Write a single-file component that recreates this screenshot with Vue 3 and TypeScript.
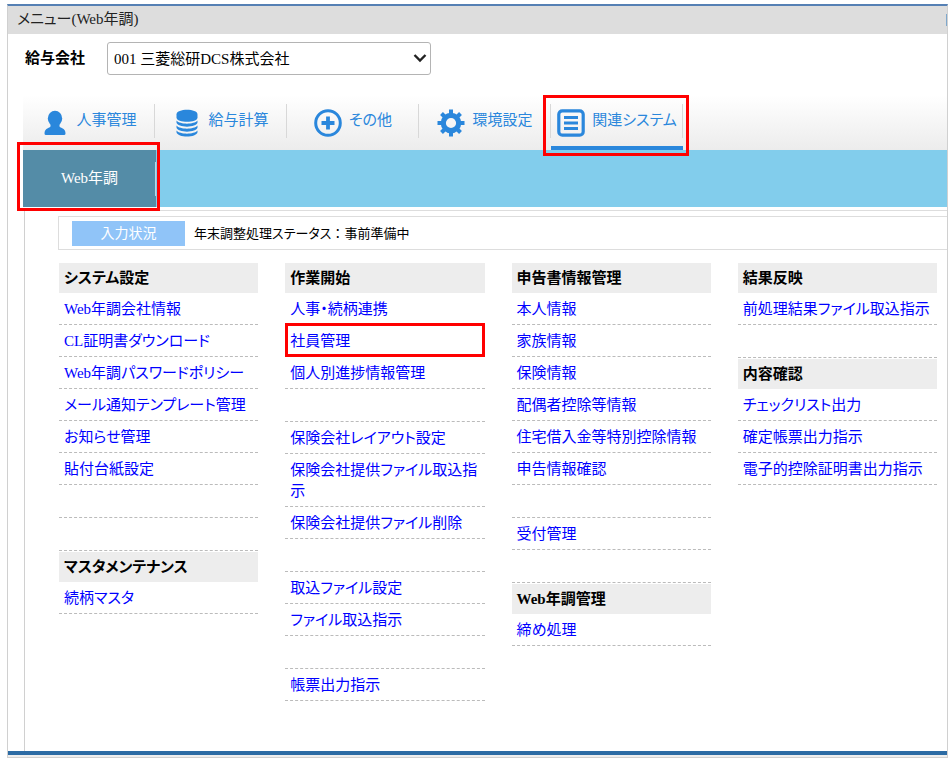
<script setup lang="ts">
import { ref } from 'vue'

interface Item {
  label: string
  marked?: boolean
}
interface Section {
  title: string
  items: Item[]
}
interface Tab {
  id: string
  label: string
}

const company = ref('001')
const activeTab = ref('related')

const tabs: Tab[] = [
  { id: 'person', label: '人事管理' },
  { id: 'payroll', label: '給与計算' },
  { id: 'other', label: 'その他' },
  { id: 'settings', label: '環境設定' },
  { id: 'related', label: '関連システム' },
]

// An empty label is a blank spacer row.
const rows = (...labels: string[]): Item[] => labels.map((label) => ({ label }))

const columns: Section[][] = [
  [
    {
      title: 'システム設定',
      items: rows(
        'Web年調会社情報',
        'CL証明書ダウンロード',
        'Web年調パスワードポリシー',
        'メール通知テンプレート管理',
        'お知らせ管理',
        '貼付台紙設定',
        '',
        '',
      ),
    },
    { title: 'マスタメンテナンス', items: rows('続柄マスタ') },
  ],
  [
    {
      title: '作業開始',
      items: [
        { label: '人事・続柄連携' },
        { label: '社員管理', marked: true },
        ...rows(
          '個人別進捗情報管理',
          '',
          '保険会社レイアウト設定',
          '保険会社提供ファイル取込指示',
          '保険会社提供ファイル削除',
          '',
          '取込ファイル設定',
          'ファイル取込指示',
          '',
          '帳票出力指示',
        ),
      ],
    },
  ],
  [
    {
      title: '申告書情報管理',
      items: rows(
        '本人情報',
        '家族情報',
        '保険情報',
        '配偶者控除等情報',
        '住宅借入金等特別控除情報',
        '申告情報確認',
        '',
        '受付管理',
        '',
      ),
    },
    { title: 'Web年調管理', items: rows('締め処理') },
  ],
  [
    { title: '結果反映', items: rows('前処理結果ファイル取込指示', '') },
    {
      title: '内容確認',
      items: rows('チェックリスト出力', '確定帳票出力指示', '電子的控除証明書出力指示'),
    },
  ],
]
</script>

<template>
  <div class="page">
    <div class="window">
      <header class="titlebar">
        <h1>メニュー(Web年調)</h1>
        <span class="edge"></span>
      </header>

      <div class="company">
        <label for="company">給与会社</label>
        <div class="select-wrap">
          <select id="company" v-model="company">
            <option value="001">001 三菱総研DCS株式会社</option>
          </select>
          <svg class="chevron" viewBox="0 0 14 10" aria-hidden="true">
            <path d="M1.5 2 L7 7.5 L12.5 2" fill="none" stroke="#222" stroke-width="2.4" />
          </svg>
        </div>
      </div>

      <nav class="tabs">
        <button
          v-for="tab in tabs"
          :key="tab.id"
          type="button"
          class="tab"
          :class="{ active: activeTab === tab.id }"
          @click="activeTab = tab.id"
        >
          <svg class="icon" viewBox="0 0 28 28" aria-hidden="true">
            <g v-if="tab.id === 'person'" fill="currentColor">
              <ellipse cx="14" cy="9.500" rx="7.200" ry="7.700" />
              <path d="M9.500 14H18.500V17C18.500 18 19.500 18.400 20.800 19C23.600 20.300 24.500 21.800 24.500 24.500Q24.500 26 23 26H5Q3.500 26 3.500 24.500C3.500 21.800 4.400 20.300 7.200 19C8.500 18.400 9.500 18 9.500 17Z" />
            </g>
            <g v-else-if="tab.id === 'payroll'" fill="currentColor">
              <path d="M3.500 5.500C3.500 -0.700 24.500 -0.700 24.500 5.500V8.500C24.500 14.300 3.500 14.300 3.500 8.500Z" />
              <path d="M3.500 11.500C7 15.700 21 15.700 24.500 11.500V13.500C23.500 19 4.500 19 3.500 13.500Z" />
              <path d="M3.500 16.500C7 20.700 21 20.700 24.500 16.500V18.500C23.500 24 4.500 24 3.500 18.500Z" />
              <path d="M3.500 21.500C7 25.700 21 25.700 24.500 21.500V23.300C23.500 29 4.500 29 3.500 23.300Z" />
            </g>
            <g v-else-if="tab.id === 'other'" fill="none" stroke="currentColor">
              <circle cx="14" cy="14" r="12.300" stroke-width="3" />
              <path d="M14 7.500V20.500M7.500 14H20.500" stroke-width="3.800" />
            </g>
            <g v-else-if="tab.id === 'settings'" fill="none" stroke="currentColor">
              <circle cx="14" cy="14" r="7.700" stroke-width="5.200" />
              <path
                d="M14 0.500V6M14 22V27.500M0.500 14H6M22 14H27.500M4.500 4.500L8.500 8.500M19.500 19.500L23.500 23.500M4.500 23.500L8.500 19.500M19.500 8.500L23.500 4.500"
                stroke-width="4"
              />
            </g>
            <g v-else fill="none" stroke="currentColor">
              <rect x="1.800" y="1.800" width="24.400" height="24.400" rx="3.500" stroke-width="3.200" />
              <path d="M7 8.500H21M7 14H21M7 19.500H21" stroke-width="3" />
            </g>
          </svg>
          <span>{{ tab.label }}</span>
        </button>
      </nav>

      <nav class="subnav">
        <button type="button" class="subtab">Web年調</button>
      </nav>

      <main class="content">
        <div class="status">
          <span class="badge">入力状況</span>
          <span class="status-text">年末調整処理ステータス<span class="colon">：</span>事前準備中</span>
        </div>

        <div class="columns">
          <div v-for="(column, c) in columns" :key="c" class="column">
            <section v-for="section in column" :key="section.title">
              <h2>{{ section.title }}</h2>
              <ul>
                <li
                  v-for="(item, i) in section.items"
                  :key="i"
                  :class="{ blank: !item.label, marked: item.marked }"
                >
                  <a v-if="item.label" href="#">{{ item.label }}</a>
                </li>
              </ul>
            </section>
          </div>
        </div>
      </main>
      <footer class="footer"></footer>
    </div>
  </div>
</template>

<style>
body {
  margin: 0;
  background: #fff;
}
</style>

<style scoped>
.page {
  box-sizing: border-box;
  min-height: 100vh;
  padding: 4px 4px 0 7px;
  display: flex;
  font-family: 'Liberation Serif', 'Noto Sans CJK JP', serif;
  font-size: 15px;
  line-height: 21px;
  font-feature-settings: 'palt';
  color: #000;
}

.window {
  flex: 1;
  min-width: 0;
  display: flex;
  flex-direction: column;
  border: 1px solid #d0d0d0;
  border-top: 2px solid #5580b4;
  background: #fff;
}

.titlebar {
  display: flex;
  align-items: center;
  justify-content: space-between;
  height: 28px;
  padding-left: 9px;
  background: #ddd;
}

.titlebar h1 {
  margin: 0;
  padding-bottom: 2px;
  font-size: 15px;
  font-weight: normal;
  color: #222;
}

.edge {
  width: 1px;
  height: 12px;
  background: #7fa8cc;
}

.company {
  display: flex;
  align-items: center;
  gap: 22px;
  padding: 8px 17px 20px;
}

.company label {
  font-weight: bold;
}

.select-wrap {
  position: relative;
  width: 324px;
}

.select-wrap select {
  appearance: none;
  display: block;
  box-sizing: border-box;
  width: 100%;
  height: 33px;
  padding: 2px 24px 0 6px;
  border: 1px solid #b4b4b4;
  border-radius: 3px;
  background: #fff;
  color: #000;
  font: inherit;
  font-feature-settings: inherit;
}

.chevron {
  position: absolute;
  right: 4px;
  top: 11px;
  width: 14px;
  height: 10px;
  pointer-events: none;
}

.tabs {
  display: flex;
  margin-left: 15px;
  height: 55px;
  background: linear-gradient(#fff, #ececec);
}

.tab {
  position: relative;
  display: flex;
  align-items: center;
  justify-content: center;
  gap: 7px;
  width: 132px;
  padding: 0;
  border: 0;
  background: none;
  color: #2a87dc;
  font: inherit;
  font-feature-settings: inherit;
  white-space: nowrap;
}

.tab span {
  padding-bottom: 5px;
}

.tab::before {
  content: '';
  position: absolute;
  right: 0;
  top: 9px;
  width: 1px;
  height: 34px;
  background: #d8d8d8;
}

.tab.active {
  box-shadow: inset 0 -4px #2a87dc;
}

.tab.active::after {
  content: '';
  position: absolute;
  inset: 0 -6px -6px -8px;
  border: 3px solid #f00;
}

.icon {
  width: 28px;
  height: 28px;
}

.subnav {
  display: flex;
  margin-left: 15px;
  height: 57px;
  background: #82cdec;
}

.subtab {
  position: relative;
  width: 133px;
  padding: 0;
  border: 0;
  background: #548ca7;
  color: #fff;
  font: inherit;
  font-feature-settings: inherit;
}

.subtab::before {
  content: '';
  position: absolute;
  right: 0;
  top: 12px;
  width: 1px;
  height: 34px;
  background: #b8d8e6;
}

.subtab::after {
  content: '';
  position: absolute;
  inset: -8px -4px -4px -6px;
  border: 3px solid #f00;
}

.content {
  flex: 1;
  margin: 3px 0 0 16px;
  padding: 5px 0 49px 33px;
  border-top: 1px solid #ddd;
  border-left: 1px solid #d0d0d0;
}

.status {
  display: flex;
  align-items: center;
  gap: 9px;
  height: 32px;
  padding-left: 13px;
  border: 1px solid #ddd;
  border-right: 0;
}

.badge {
  width: 113px;
  line-height: 25px;
  background: #90c4f8;
  color: #fff;
  font-size: 14px;
  text-align: center;
}

.status-text {
  font-size: 13px;
}

.colon {
  font-feature-settings: normal;
}

.columns {
  display: grid;
  grid-template-columns: repeat(4, minmax(0, 1fr));
  gap: 27px;
  padding: 13px 10px 0 1px;
}

h2 {
  margin: 0;
  padding: 5px 5px 4px;
  background: #ededed;
  font-size: 15px;
  font-weight: bold;
}

section + section h2 {
  margin-top: 1px;
}

ul {
  margin: 0;
  padding: 0;
  list-style: none;
}

li {
  position: relative;
  min-height: 21px;
  padding: 6px 0 4px 5px;
  border-bottom: 1px dashed #bbb;
}

li.blank {
  padding-bottom: 5px;
}

li.marked::after {
  content: '';
  position: absolute;
  inset: -2px 0 -1px;
  border: 3px solid #f00;
  pointer-events: none;
}

a {
  color: #00f;
  text-decoration: none;
}

.footer {
  height: 2px;
  border-top: 4px solid #2c6ba4;
  background: #eee;
}
</style>
